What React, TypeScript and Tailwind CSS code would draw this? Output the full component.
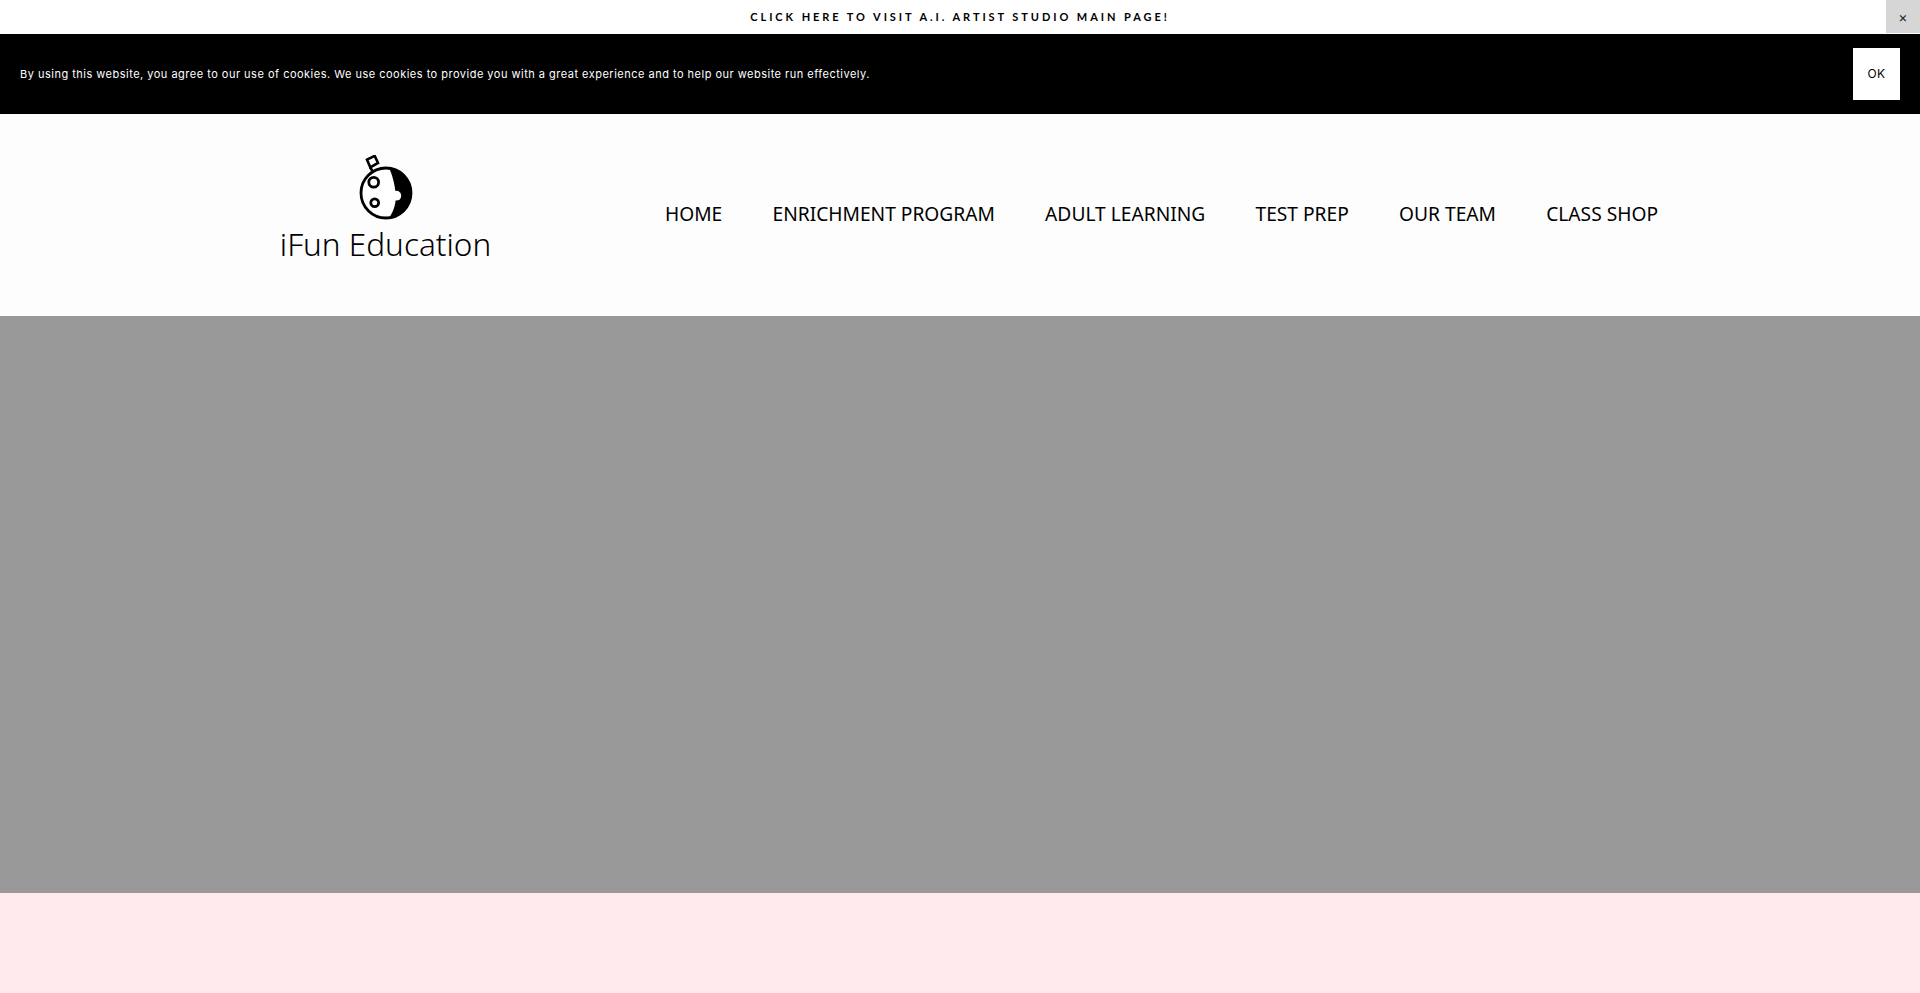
const nav = ["HOME", "ENRICHMENT PROGRAM", "ADULT LEARNING", "TEST PREP", "OUR TEAM", "CLASS SHOP"];

function Logo() {
  return (
    <svg width="62" height="66" viewBox="0 0 62 66" className="block" fill="none">
      <path d="M15.3 12.3 L19 19" stroke="#000" strokeWidth="2.6" />
      <path d="M12 4.7 L19.7 0.9 L23 8 L15.3 12.3 Z" stroke="#000" strokeWidth="2.6" fill="#fff" />
      <circle cx="31" cy="38" r="25" stroke="#000" strokeWidth="2.8" fill="#fff" />
      <path d="M34 13 A25 25 0 0 1 34 62.8 C39 56 41.5 48 40.5 38 C40 30 37.5 20 34 13 Z" fill="#000" />
      <circle cx="18.7" cy="27.3" r="4.9" stroke="#000" strokeWidth="2.8" fill="#fff" />
      <circle cx="19.7" cy="47.7" r="3.9" stroke="#000" strokeWidth="2.8" fill="#fff" />
      <circle cx="41.3" cy="40.7" r="4.9" fill="#fff" />
    </svg>
  );
}

export default function App() {
  return (
    <div className="min-h-[993px] flex flex-col bg-[#ffe9ea] overflow-hidden font-['Liberation_Sans',sans-serif]">
      <div className="h-[34px] bg-white flex items-center justify-center relative">
        <a className="font-['Lato',sans-serif] text-[11px] font-bold tracking-[2.93px] text-black">
          CLICK HERE TO VISIT A.I. ARTIST STUDIO MAIN PAGE!
        </a>
        <button className="absolute right-0 top-0 w-[34px] h-[33px] bg-[#d6d6d6] flex items-center justify-center text-[14px] text-[#222] font-['Inter',sans-serif]">
          ×
        </button>
      </div>
      <div className="h-[80px] bg-black flex items-center justify-between pl-5 pr-5">
        <p className="font-['Inter',sans-serif] text-[11px] tracking-[0.49px] text-white">
          By using this website, you agree to our use of cookies. We use cookies to provide you with a great experience and to help our website run effectively.
        </p>
        <button className="w-[47px] h-[52px] bg-white text-black text-[12px] tracking-[0.5px] font-['Inter',sans-serif] flex items-center justify-center">
          OK
        </button>
      </div>
      <header className="h-[202px] bg-[#fdfdfd] flex items-center pl-[280px] pr-[262px] justify-between">
        <div className="w-[211px] flex flex-col items-center pb-[12px]">
          <Logo />
          <div className="mt-[3px] font-['Noto_Sans',sans-serif] font-light text-[31.5px] leading-[40px] text-black whitespace-nowrap">iFun Education</div>
        </div>
        <nav className="flex items-center gap-[50.2px] pb-[2px] font-['Noto_Sans',sans-serif] text-[19.2px] text-black whitespace-nowrap">
          {nav.map((n) => (
            <a key={n}>{n}</a>
          ))}
        </nav>
      </header>
      <div className="h-[577px] bg-[#999999]" />
      <div className="h-[100px] bg-[#ffe9ea]" />
    </div>
  );
}
